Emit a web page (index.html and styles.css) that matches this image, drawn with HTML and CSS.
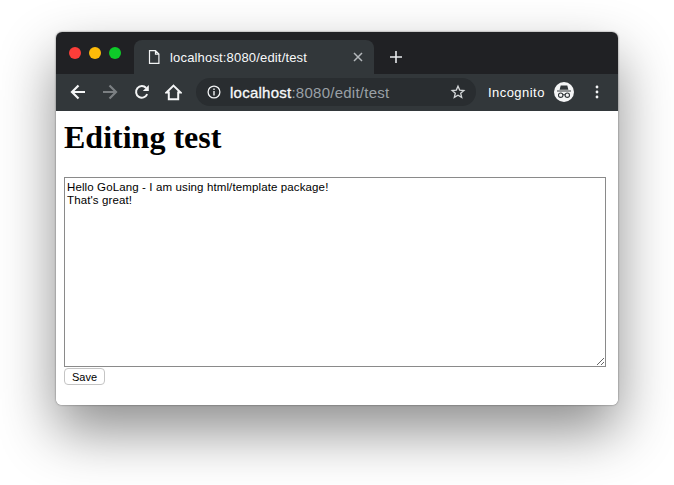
FILE: index.html
```html
<!DOCTYPE html>
<html lang="en">

<head>
    <meta charset="UTF-8">
    <meta name="viewport" content="width=device-width, initial-scale=1.0">
    <title>Editing test</title>
    <link rel="stylesheet" href="styles.css">
</head>

<body>
    <div class="window">
        <div class="tabstrip">
            <div class="traffic">
                <span class="light red"></span>
                <span class="light yellow"></span>
                <span class="light green"></span>
            </div>
            <div class="tab">
                <svg class="tab-icon" width="12" height="14" viewBox="0 0 12 14">
                    <path d="M1.5 .7H7.5L10.9 4.1V13.3H1.5Z M7.5 .7V4.1H10.9" fill="none" stroke="#f1f3f4" stroke-width="1.2"/>
                </svg>
                <span class="tab-title">localhost:8080/edit/test</span>
                <svg class="tab-close" width="10" height="10" viewBox="0 0 10 10">
                    <path d="M1 1L9 9M9 1L1 9" stroke="#b4b8bb" stroke-width="1.5"/>
                </svg>
            </div>
            <svg class="new-tab" width="12" height="12" viewBox="0 0 12 12">
                <path d="M6 0V12M0 6H12" stroke="#e8eaed" stroke-width="1.6"/>
            </svg>
        </div>
        <div class="toolbar">
            <svg class="tool back" width="16" height="16" viewBox="0 0 16 16">
                <path d="M15 8H2M8.5 1.5L2 8L8.5 14.5" fill="none" stroke="#f4f5f6" stroke-width="2.2"/>
            </svg>
            <svg class="tool forward" width="16" height="16" viewBox="0 0 16 16">
                <path d="M1 8H14M7.5 1.5L14 8L7.5 14.5" fill="none" stroke="#7b7f82" stroke-width="2.2"/>
            </svg>
            <svg class="tool reload" width="16" height="16" viewBox="0 0 16 16">
                <path d="M13.2 10.2A5.8 5.8 0 1 1 12.2 4" fill="none" stroke="#f4f5f6" stroke-width="2"/>
                <path d="M14.8 1V7H8.8Z" fill="#f4f5f6"/>
            </svg>
            <svg class="tool home" width="17" height="17" viewBox="0 0 17 17">
                <path d="M8.5 1.6L15.6 8.6H13.2V15.2H3.8V8.6H1.4Z" fill="none" stroke="#f4f5f6" stroke-width="2"/>
            </svg>
            <div class="omnibox">
                <svg class="info" width="14" height="14" viewBox="0 0 14 14">
                    <circle cx="7" cy="7" r="5.9" fill="none" stroke="#f1f3f4" stroke-width="1.3"/>
                    <path d="M7 6V10.6M7 3.4V4.9" stroke="#f1f3f4" stroke-width="1.4"/>
                </svg>
                <span class="url"><b>localhost</b>:8080/edit/test</span>
                <svg class="star" width="16" height="16" viewBox="0 0 16 16">
                    <path d="M8 2.2L9.7 6.1L13.9 6.5L10.7 9.3L11.7 13.4L8 11.2L4.3 13.4L5.3 9.3L2.1 6.5L6.3 6.1Z" fill="none" stroke="#d5d8da" stroke-width="1.3"/>
                </svg>
            </div>
            <span class="incognito-label">Incognito</span>
            <svg class="incognito-icon" width="20" height="20" viewBox="0 0 20 20">
                <circle cx="10" cy="10" r="10" fill="#f4f5f6"/>
                <path d="M6.7 3.6H13.3L14.4 7.8H5.6Z M3 8.4H17V9.6H3Z" fill="#33383b"/>
                <circle cx="6.7" cy="13.2" r="2.2" fill="none" stroke="#33383b" stroke-width="1.1"/>
                <circle cx="13.3" cy="13.2" r="2.2" fill="none" stroke="#33383b" stroke-width="1.1"/>
                <path d="M8.9 12.8H11.1" stroke="#33383b" stroke-width="1"/>
            </svg>
            <svg class="menu" width="4" height="14" viewBox="0 0 4 14">
                <circle cx="2" cy="2" r="1.4" fill="#f4f5f6"/>
                <circle cx="2" cy="7" r="1.4" fill="#f4f5f6"/>
                <circle cx="2" cy="12" r="1.4" fill="#f4f5f6"/>
            </svg>
        </div>
        <div class="page">
            <h1>Editing test</h1>
            <form>
                <textarea class="body-text">Hello GoLang - I am using html/template package!
That's great!</textarea>
                <button type="button" class="save">Save</button>
            </form>
        </div>
    </div>
</body>

</html>
```

FILE: styles.css
```css
html,
body {
    margin: 0;
    padding: 0;
    height: 100%;
    background: #fff;
    overflow: hidden;
}

body {
    padding: 32px 56px;
    box-sizing: border-box;
}

.window {
    width: 562px;
    height: 373px;
    border-radius: 6px;
    overflow: hidden;
    background: #fff;
    box-shadow: 0 26px 56px rgba(0, 0, 0, 0.45), 0 0 2px rgba(0, 0, 0, 0.55);
    display: flex;
    flex-direction: column;
    font-family: "Liberation Sans", Arial, sans-serif;
}

.tabstrip {
    height: 42px;
    flex: none;
    background: #202124;
    display: flex;
    align-items: flex-end;
}

.traffic {
    width: 78px;
    height: 42px;
    box-sizing: border-box;
    padding: 15px 0 0 13px;
    display: flex;
    gap: 8px;
}

.light {
    width: 12px;
    height: 12px;
    border-radius: 50%;
}

.red {
    background: #fc3d39;
}

.yellow {
    background: #fdbb09;
}

.green {
    background: #0ecb29;
}

.tab {
    width: 240px;
    height: 34px;
    background: #32373a;
    border-radius: 8px 8px 0 0;
    display: flex;
    align-items: center;
    color: #f8f9fa;
    font-size: 13px;
}

.tab-icon {
    margin-left: 14px;
}

.tab-title {
    margin-left: 10px;
    flex: 1;
    letter-spacing: 0.17px;
}

.tab-close {
    margin-right: 11px;
}

.new-tab {
    margin: 0 0 11px 16px;
}

.toolbar {
    height: 37px;
    box-sizing: border-box;
    padding-bottom: 1px;
    flex: none;
    background: #32373a;
    display: flex;
    align-items: center;
    color: #fff;
    font-size: 13px;
}

.back {
    margin-left: 14px;
}

.forward {
    margin-left: 16px;
}

.reload {
    margin-left: 16px;
}

.home {
    margin-left: 15px;
}

.omnibox {
    width: 280px;
    height: 28px;
    margin-left: 14px;
    background: #292d30;
    border-radius: 14px;
    display: flex;
    align-items: center;
}

.info {
    margin-left: 11px;
}

.url {
    margin-left: 9px;
    flex: 1;
    font-size: 15px;
    letter-spacing: 0.25px;
    color: #9aa0a6;
}

.url b {
    font-weight: 400;
    color: #f8f9fa;
    -webkit-text-stroke: 0.3px #f8f9fa;
}

.star {
    margin-right: 10px;
}

.incognito-label {
    margin-left: 12px;
    letter-spacing: 0.45px;
}

.incognito-icon {
    margin-left: 9px;
}

.menu {
    margin-left: 21px;
}

.page {
    flex: 1;
    padding: 8px;
    background: #fff;
}

h1 {
    margin: 0 0 21px;
    font-family: "Liberation Serif", "Times New Roman", serif;
    font-size: 32px;
    line-height: 37px;
    color: #000;
}

form {
    margin: 0;
}

.body-text {
    display: block;
    width: 542px;
    height: 190px;
    box-sizing: border-box;
    margin: 0;
    padding: 3px 2px 2px;
    border: 1px solid #8a8a8a;
    outline: none;
    font-family: "Liberation Sans", Arial, sans-serif;
    font-size: 11.5px;
    letter-spacing: 0.12px;
    line-height: 13px;
    color: #000;
}

.save {
    display: block;
    width: 41px;
    height: 17px;
    margin: 1px 0 0;
    padding: 0;
    background: #fff;
    border: 1px solid #c4c4c4;
    border-radius: 4px;
    font-family: "Liberation Sans", Arial, sans-serif;
    font-size: 11px;
    color: #000;
}
```
